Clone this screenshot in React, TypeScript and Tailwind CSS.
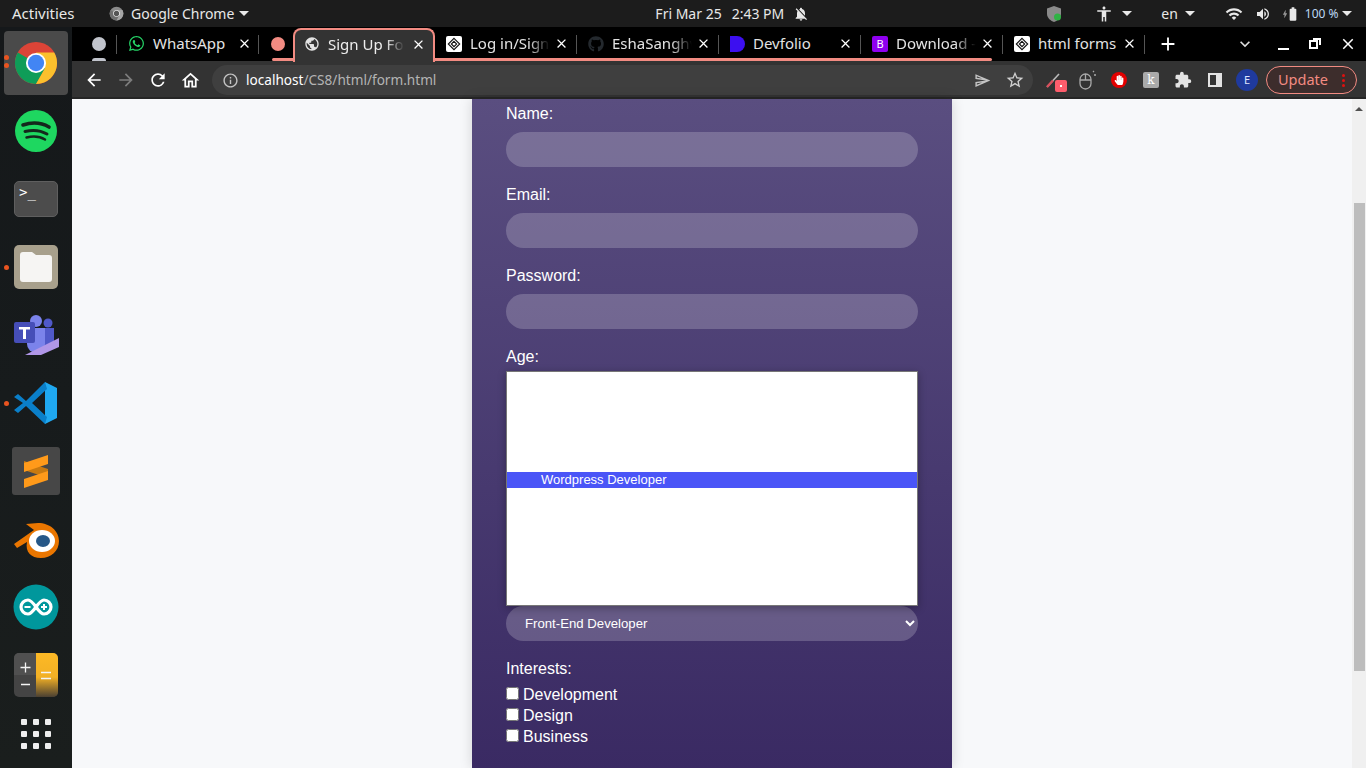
import { FC, ReactNode } from "react";
import {
  MdArrowBack,
  MdArrowForward,
  MdRefresh,
  MdOutlineHome,
  MdInfoOutline,
  MdPublic,
  MdStarBorder,
  MdOutlineSend,
  MdExtension,
  MdClose,
  MdAdd,
  MdKeyboardArrowDown,
  MdNotificationsOff,
  MdAccessibility,
  MdWifi,
  MdVolumeUp,
  MdBatteryFull,
  MdBolt,
} from "react-icons/md";
import { FaWhatsapp, FaGithub, FaHandPaper } from "react-icons/fa";

const UI_FONT = "font-['Noto_Sans','Open_Sans',sans-serif]";

const Caret: FC<{ className?: string }> = ({ className }) => (
  <span
    className={`inline-block w-0 h-0 border-x-[5px] border-x-transparent border-t-[5px] border-t-[#e8e8e8] ${className ?? ""}`}
  />
);

const ChromeLogo: FC<{ size: number; gray?: boolean }> = ({ size, gray }) => (
  <svg width={size} height={size} viewBox="0 0 48 48">
    <circle cx="24" cy="24" r="22" fill={gray ? "#8a8a8a" : "#db4437"} />
    <path d="M24 24 L5 13 A22 22 0 0 0 24 46 L35 27 Z" fill={gray ? "#6f6f6f" : "#0f9d58"} />
    <path d="M24 13 H43 A22 22 0 0 1 24 46 L33 30 Z" fill={gray ? "#a5a5a5" : "#fbc02d"} />
    <circle cx="24" cy="24" r="10.5" fill="#fff" />
    <circle cx="24" cy="24" r="8.5" fill={gray ? "#555" : "#4285f4"} />
  </svg>
);

const CodepenIcon: FC = () => (
  <span className="w-4 h-4 bg-white rounded-[2px] flex items-center justify-center shrink-0">
    <svg width="14" height="14" viewBox="0 0 16 16" fill="none" stroke="#111" strokeWidth="1.3">
      <path d="M8 1.5 14.5 8 8 14.5 1.5 8Z" />
      <path d="M8 5 11 8 8 11 5 8Z" />
    </svg>
  </span>
);

type Tab = {
  title: string;
  icon: ReactNode;
  underline?: boolean;
  short?: boolean;
  noFade?: boolean;
};

const tabs: Tab[] = [
  { title: "Log in/Sign Up", icon: <CodepenIcon />, underline: true },
  { title: "EshaSanghvi", icon: <FaGithub className="text-[#24292e] w-4 h-4 shrink-0" />, underline: true },
  {
    title: "Devfolio",
    icon: <span className="w-[15px] h-4 bg-[#3c0ff0] rounded-r-full shrink-0" />,
    underline: true,
    noFade: true,
  },
  {
    title: "Download - Boot",
    icon: (
      <span className="w-4 h-4 bg-[#8f00f0] rounded-[2px] text-white text-[11px] leading-4 text-center shrink-0">
        B
      </span>
    ),
    underline: true,
    short: true,
  },
  { title: "html forms", icon: <CodepenIcon />, noFade: true },
];

const TabItem: FC<{ tab: Tab }> = ({ tab }) => (
  <div className="relative w-[142px] h-full flex items-center pl-[11px] pr-[8px] pb-[1px]">
    {tab.icon}
    <span
      className={`ml-2 flex-1 overflow-hidden whitespace-nowrap text-[15px] text-[#e3e3e3] ${
        tab.noFade ? "" : "[mask-image:linear-gradient(to_right,black_70%,transparent_95%)]"
      }`}
    >
      {tab.title}
    </span>
    <MdClose className="text-white w-[15px] h-[15px] shrink-0" />
    <span className="absolute right-0 top-[8px] h-[19px] w-px bg-[#555]" />
    {tab.underline && (
      <span className={`absolute bottom-0 left-0 h-[3px] bg-[#f28b82] ${tab.short ? "right-[11px] rounded-r" : "right-0"}`} />
    )}
  </div>
);

const TabStrip: FC = () => (
  <div className="h-[34px] bg-black flex items-stretch shrink-0">
    <div className="relative w-[45px] h-full">
      <span className="absolute left-[20px] top-[10px] w-[14px] h-[14px] rounded-full bg-[#c1c4cc]" />
      <span className="absolute left-[20px] bottom-0 w-[14px] h-[3px] rounded-t bg-[#c1c4cc]" />
      <span className="absolute right-0 top-[8px] h-[19px] w-px bg-[#555]" />
    </div>
    <div className="relative w-[142px] h-full flex items-center pl-[11px] pr-[7px] pb-[2px]">
      <FaWhatsapp className="text-[#25d366] w-[17px] h-[17px] shrink-0" />
      <span className="ml-2 flex-1 text-[15px] text-[#e3e3e3]">WhatsApp</span>
      <MdClose className="text-white w-[15px] h-[15px] shrink-0" />
      <span className="absolute right-0 top-[8px] h-[19px] w-px bg-[#555]" />
    </div>
    <div className="relative w-[34px] h-full">
      <span className="absolute left-[12px] top-[10px] w-[14px] h-[14px] rounded-full bg-[#f28b82]" />
      <span className="absolute bottom-0 left-[13px] right-0 h-[3px] bg-[#f28b82] rounded-l" />
    </div>
    <div className="relative w-[142px] h-[34px] mt-px bg-[#333] border-2 border-b-0 border-[#f28b82] rounded-t-lg flex items-center pl-[9px] pr-[7px] pb-[4px]">
      <MdPublic className="text-[#e3e3e3] w-4 h-4 shrink-0" />
      <span className="ml-2 flex-1 overflow-hidden whitespace-nowrap text-[15px] text-[#eee] [mask-image:linear-gradient(to_right,black_70%,transparent_92%)]">
        Sign Up Form
      </span>
      <MdClose className="text-white w-[15px] h-[15px] shrink-0" />
    </div>
    {tabs.map((tab) => (
      <TabItem key={tab.title} tab={tab} />
    ))}
    <MdAdd className="text-white w-[22px] h-[22px] ml-3 self-center" />
    <MdKeyboardArrowDown className="text-[#ddd] w-5 h-5 ml-[56px] self-center" />
    <span className="ml-[23px] mt-[21px] w-[11px] h-[2px] bg-white" />
    <svg className="ml-[20px] mt-[11px]" width="12" height="11" viewBox="0 0 12 11" fill="none" stroke="#fff" strokeWidth="2">
      <rect x="1" y="3" width="7" height="7" />
      <path d="M4 1H11V7" />
    </svg>
    <MdClose className="text-white w-[18px] h-[18px] ml-[18px] self-center" />
  </div>
);

const ToolbarIcon: FC<{ children: ReactNode }> = ({ children }) => (
  <span className="w-8 flex items-center justify-center shrink-0">{children}</span>
);

const Toolbar: FC = () => (
  <div className="h-[38px] bg-[#333] border-b-2 border-[#262626] flex items-center shrink-0 pl-[6px] pt-[2px]">
    <ToolbarIcon>
      <MdArrowBack className="text-white w-5 h-5" />
    </ToolbarIcon>
    <ToolbarIcon>
      <MdArrowForward className="text-[#7d7d7d] w-5 h-5" />
    </ToolbarIcon>
    <ToolbarIcon>
      <MdRefresh className="text-white w-5 h-5" />
    </ToolbarIcon>
    <ToolbarIcon>
      <MdOutlineHome className="text-white w-[21px] h-[21px]" />
    </ToolbarIcon>
    <div className="ml-[6px] w-[821px] h-[30px] rounded-full bg-[#3f3f3f] flex items-center pl-[10px] pr-[2px]">
      <MdInfoOutline className="text-[#c4c4c4] w-[17px] h-[17px]" />
      <span className="ml-[7px] flex-1 text-[13.6px] whitespace-nowrap text-white">
        localhost<span className="text-[#b4b4b4]">/CS8/html/form.html</span>
      </span>
      <MdOutlineSend className="text-[#c4c4c4] w-[17px] h-[17px] mr-[14px]" />
      <MdStarBorder className="text-[#d0d0d0] w-5 h-5 mr-[6px]" />
    </div>
    <span className="relative w-8 ml-[4px] flex justify-center">
      <svg width="18" height="18" viewBox="0 0 18 18">
        <path d="M3 16 15 3" stroke="#bbb" strokeWidth="1.6" />
        <path d="M3 16 9 9.5" stroke="#d94f5c" strokeWidth="2.4" />
      </svg>
      <span className="absolute left-[18px] top-[9px] w-3 h-3 rounded-[2px] bg-[#ff5d6c] flex items-center justify-center">
        <span className="w-[2px] h-[2px] bg-white" />
      </span>
    </span>
    <span className="w-[2px] shrink-0" />
    <ToolbarIcon>
      <svg width="18" height="20" viewBox="0 0 18 20" fill="none" stroke="#aaa" strokeWidth="1.3">
        <rect x="2" y="4" width="11" height="15" rx="5.5" />
        <path d="M2 10H13M7.5 4V10" />
        <path d="M15 2 16 1M16 5H18" />
      </svg>
    </ToolbarIcon>
    <ToolbarIcon>
      <span className="w-4 h-4 rounded-full bg-[#e30000] flex items-center justify-center">
        <FaHandPaper className="text-white w-[10px] h-[10px]" />
      </span>
    </ToolbarIcon>
    <ToolbarIcon>
      <span className="w-4 h-4 rounded-[2px] bg-[#aaa] text-white text-[12px] leading-4 text-center font-['DejaVu_Serif',serif]">
        k
      </span>
    </ToolbarIcon>
    <ToolbarIcon>
      <MdExtension className="text-[#e3e3e3] w-[18px] h-[18px]" />
    </ToolbarIcon>
    <ToolbarIcon>
      <span className="w-[14px] h-[14px] border-2 border-[#e3e3e3] border-r-[6px]" />
    </ToolbarIcon>
    <ToolbarIcon>
      <span className="w-[22px] h-[22px] rounded-full bg-[#1f3a9e] text-[#dfe3ff] text-[11px] leading-[22px] text-center">
        E
      </span>
    </ToolbarIcon>
    <div className="ml-[3px] w-[91px] h-[28px] rounded-full border border-[#f28b82] bg-[#3d2d2c] flex items-center pl-[11px] text-[14.5px] text-[#f28b82]">
      Update
      <span className="ml-[14px] flex flex-col gap-[2px]">
        <span className="w-[3px] h-[3px] bg-[#e01010] rounded-full" />
        <span className="w-[3px] h-[3px] bg-[#e01010] rounded-full" />
        <span className="w-[3px] h-[3px] bg-[#e01010] rounded-full" />
      </span>
    </div>
  </div>
);

const DockItem: FC<{ children: ReactNode; dots?: number; active?: boolean }> = ({ children, dots, active }) => (
  <div className="relative h-[68px] w-full flex items-center justify-center shrink-0">
    {active && <span className="absolute left-[4px] top-[2px] w-[64px] h-[64px] rounded-[4px] bg-[#4a4a4a]" />}
    <span className="relative flex items-center justify-center">{children}</span>
    {dots === 1 && <span className="absolute left-[4px] top-[32px] w-[5px] h-[5px] rounded-full bg-[#e95420]" />}
    {dots === 2 && (
      <span className="absolute left-[4px] top-[26px] flex flex-col gap-[3px]">
        <span className="w-[5px] h-[5px] rounded-full bg-[#e95420]" />
        <span className="w-[5px] h-[5px] rounded-full bg-[#e95420]" />
      </span>
    )}
  </div>
);

const Dock: FC = () => (
  <aside className="w-[72px] shrink-0 pt-[2px] flex flex-col items-center bg-gradient-to-b from-[#15181a] via-[#171b1c] to-[#1a1e1d] overflow-hidden">
    <DockItem active dots={2}>
      <ChromeLogo size={46} />
    </DockItem>
    <DockItem>
      <svg width="42" height="42" viewBox="0 0 42 42" fill="none">
        <circle cx="21" cy="21" r="21" fill="#1ed760" />
        <path d="M8 15C17 12 27 13 34 17" stroke="#14281c" strokeWidth="3.6" strokeLinecap="round" />
        <path d="M10 21.5C18 19.5 26 20.5 32 24" stroke="#14281c" strokeWidth="3" strokeLinecap="round" />
        <path d="M11.5 27.5C18 26 25 26.5 30 29.5" stroke="#14281c" strokeWidth="2.5" strokeLinecap="round" />
      </svg>
    </DockItem>
    <DockItem>
      <span className="w-11 h-9 rounded-[5px] bg-[#4c4c4c] border border-[#5f5f5f] text-white text-[14px] leading-none pt-[3px] pl-[4px] font-['DejaVu_Sans_Mono',monospace]">
        &gt;_
      </span>
    </DockItem>
    <DockItem dots={1}>
      <svg width="46" height="46" viewBox="0 0 46 46">
        <rect x="1" y="1" width="44" height="44" rx="5" fill="#a8a08c" />
        <path d="M7 11a3 3 0 0 1 3-3h9l4 3h13a3 3 0 0 1 3 3v21a3 3 0 0 1-3 3H10a3 3 0 0 1-3-3Z" fill="#f6f5f3" />
      </svg>
    </DockItem>
    <DockItem>
      <svg width="46" height="46" viewBox="0 0 46 46">
        <circle cx="23" cy="9" r="6" fill="#7b83eb" />
        <circle cx="35" cy="11" r="4.5" fill="#5059c9" />
        <path d="M28 16h13v13a7 7 0 0 1-7 6h-6Z" fill="#5059c9" />
        <path d="M14 16h18v16a9 9 0 0 1-18 0Z" fill="#7b83eb" />
        <rect x="1" y="10" width="21" height="21" rx="2" fill="#464eb8" />
        <path d="M6 15h11v2.5h-4V27h-3v-9.5H6Z" fill="#fff" />
        <path d="M12 43 46 26v9L28 43Z" fill="#b197e8" />
      </svg>
    </DockItem>
    <DockItem dots={1}>
      <svg width="44" height="42" viewBox="0 0 44 42">
        <path d="M31 0 43 6V36L31 42Z" fill="#1fa8f0" />
        <path d="M31 0 12 19 4 12 0 15 9 21 0 28 4 31 12 24 31 42 33 35 18 21 33 7Z" fill="#0a7fc9" />
      </svg>
    </DockItem>
    <DockItem>
      <svg width="48" height="48" viewBox="0 0 48 48">
        <rect width="48" height="48" rx="3" fill="#474747" />
        <path d="M12 14 36 22V31L12 23Z" fill="#c97a10" />
        <path d="M36 8 12 16V25L36 17Z" fill="#ff9a1a" />
        <path d="M36 24 12 32V41L36 33Z" fill="#ff9a1a" />
      </svg>
    </DockItem>
    <DockItem>
      <svg className="mt-[2px]" width="48" height="40" viewBox="0 0 48 40">
        <path d="M2 24 22 10 14 4 26 3C38 3 47 11 47 21S39 38 29 38 13 32 15 22L5 28Z" fill="#ea7600" />
        <ellipse cx="30" cy="21" rx="13" ry="11" fill="#fff" />
        <ellipse cx="31" cy="21" rx="7" ry="6" fill="#265787" />
      </svg>
    </DockItem>
    <DockItem>
      <svg className="mt-[-1px]" width="46" height="46" viewBox="0 0 46 46" fill="none">
        <circle cx="23" cy="23" r="22.5" fill="#00979c" />
        <path
          d="M15 16a7 7 0 1 0 0 14c6 0 10-14 16-14a7 7 0 1 1 0 14c-6 0-10-14-16-14Z"
          stroke="#fff"
          strokeWidth="3.2"
        />
        <path d="M11.5 23h6M28 23h6M31 20v6" stroke="#fff" strokeWidth="2" />
      </svg>
    </DockItem>
    <DockItem>
      <svg width="44" height="44" viewBox="0 0 44 44">
        <defs>
          <linearGradient id="calc-yellow" x1="0" y1="0" x2="0" y2="1">
            <stop offset="0" stopColor="#fdb925" />
            <stop offset="0.55" stopColor="#f2b025" />
            <stop offset="1" stopColor="#4a4032" />
          </linearGradient>
        </defs>
        <rect width="44" height="44" rx="5" fill="#444" />
        <path d="M5 0H22V22H0V5A5 5 0 0 1 5 0Z" fill="#505050" />
        <path d="M22 0H39A5 5 0 0 1 44 5V39A5 5 0 0 1 39 44H22Z" fill="url(#calc-yellow)" />
        <path d="M6.500 14.500H16.500M11.500 9.500V19.500M7 31.500H16M27 19.500H37M27 25.500H37" stroke="#f4f4f4" strokeWidth="1.300" />
      </svg>
    </DockItem>
    <div className="h-[50px] w-full flex items-center justify-center shrink-0">
      <span className="grid grid-cols-3 gap-[6px]">
        {Array.from({ length: 9 }).map((_, i) => (
          <span key={i} className="w-[6px] h-[6px] rounded-[1px] bg-[#eee]" />
        ))}
      </span>
    </div>
  </aside>
);

const TopBar: FC = () => (
  <div className="h-[27px] bg-[#1c1c1c] flex items-center text-sm text-[#e8e8e8] shrink-0 pl-3">
    <span className="w-[97px] text-[15px]">Activities</span>
    <ChromeLogo size={15} gray />
    <span className="ml-[7px]">Google Chrome</span>
    <Caret className="ml-[5px]" />
    <span className="ml-[406px]">Fri Mar 25</span>
    <span className="ml-[10px]">2:43 PM</span>
    <MdNotificationsOff className="ml-[9px] w-4 h-4" />
    <svg className="ml-[238px]" width="14" height="16" viewBox="0 0 14 16">
      <path d="M7 0 14 2.5V8C14 12 10 15 7 16 4 15 0 12 0 8V2.5Z" fill="#8a8a8a" />
      <circle cx="10.5" cy="11" r="3.5" fill="#2fb344" />
    </svg>
    <MdAccessibility className="ml-[34px] w-[18px] h-[18px]" />
    <Caret className="ml-[9px]" />
    <span className="ml-[29px]">en</span>
    <Caret className="ml-[7px]" />
    <MdWifi className="ml-[30px] w-[18px] h-[18px]" />
    <MdVolumeUp className="ml-[12px] w-4 h-4" />
    <MdBolt className="ml-[9px] w-[10px] h-[14px] text-[#999]" />
    <MdBatteryFull className="w-4 h-[18px] ml-[-5px]" />
    <span className="ml-[4px] text-xs text-[#bcd9f5]">100 %</span>
    <Caret className="ml-[3px]" />
  </div>
);

const Field: FC<{ label: string; type: string }> = ({ label, type }) => (
  <div className="h-[81px]">
    <label className="block h-[19px] leading-[19px] mb-[9px]">{label}</label>
    <input type={type} className="block w-full h-[35px] rounded-full bg-white/20 outline-none" />
  </div>
);

const SignUpForm: FC = () => (
  <div className="w-[480px] h-full overflow-hidden shrink-0 px-[34px] pt-[5px] text-white text-base font-['Liberation_Sans',Arial,sans-serif] bg-gradient-to-b from-[#5a4e80] to-[#3a2a63] shadow-[0_0_12px_rgba(0,0,0,0.15)]">
    <Field label="Name:" type="text" />
    <Field label="Email:" type="email" />
    <Field label="Password:" type="password" />
    <label className="block h-[19px] leading-[19px] mb-[5px]">Age:</label>
    <div className="relative pt-[235px]">
      <div className="absolute left-0 right-0 top-0 h-[235px] bg-white border border-[#777] shadow-[0_2px_8px_rgba(0,0,0,0.3)] pt-[100px]">
        <div className="h-4 bg-[#4a55f7] text-white text-[13px] leading-4 pl-[34px]">Wordpress Developer</div>
      </div>
      <select
        defaultValue="fe"
        className="block w-full h-[35px] rounded-full bg-white/20 text-white text-[13.2px] pl-[15px] pr-1 outline-none"
      >
        <option value="fe" className="text-black">Front-End Developer</option>
        <option value="wp" className="text-black">Wordpress Developer</option>
      </select>
    </div>
    <label className="block mt-[18px] h-[19px] leading-[19px]">Interests:</label>
    <div className="mt-[6px] flex flex-col">
      {["Development", "Design", "Business"].map((item) => (
        <label key={item} className="h-[21px] flex items-center leading-[21px] text-base">
          <input type="checkbox" className="w-[13px] h-[13px] mr-[4px] mb-[2px]" />
          {item}
        </label>
      ))}
    </div>
  </div>
);

const Scrollbar: FC = () => (
  <div className="w-[14px] h-full bg-[#f0f0f0] shrink-0 flex flex-col items-center">
    <span className="mt-[8px] w-0 h-0 border-x-[4px] border-x-transparent border-b-[4px] border-b-[#505050]" />
    <span className="mt-[92px] w-[11px] h-[468px] bg-[#bdbdbd]" />
  </div>
);

const App: FC = () => {
  return (
    <div className={`w-[1366px] h-[768px] overflow-hidden flex flex-col ${UI_FONT}`}>
      <TopBar />
      <div className="flex-1 flex min-h-0">
        <Dock />
        <div className="flex-1 flex flex-col min-w-0">
          <TabStrip />
          <Toolbar />
          <div className="flex-1 flex min-h-0 bg-[#f7f8fa]">
            <div className="flex-1 flex justify-center min-w-0">
              <SignUpForm />
            </div>
            <Scrollbar />
          </div>
        </div>
      </div>
    </div>
  );
};

export default App;
